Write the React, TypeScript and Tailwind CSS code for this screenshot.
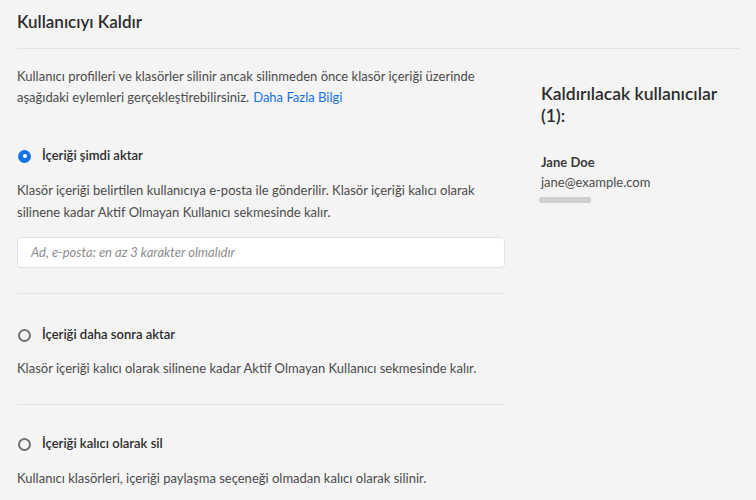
import React from "react";

function Radio({ checked }: { checked?: boolean }) {
  if (checked) {
    return (
      <span className="flex h-[13px] w-[13px] shrink-0 items-center justify-center rounded-full bg-[#1473e6]">
        <span className="h-[4px] w-[4px] rounded-full bg-white" />
      </span>
    );
  }
  return <span className="h-[13px] w-[13px] shrink-0 rounded-full border-2 border-[#707070] bg-[#f7f7f7]" />;
}

function Option({ checked, label, children }: { checked?: boolean; label: string; children: React.ReactNode }) {
  return (
    <div>
      <div className="flex h-[22px] items-center gap-[11px] pl-[1px]">
        <Radio checked={checked} />
        <span className="text-[13px] font-semibold text-[#2c2c2c]">{label}</span>
      </div>
      {children}
    </div>
  );
}

export default function App() {
  return (
    <div
      className="h-[500px] w-[756px] overflow-hidden bg-[#f4f4f4] text-[#4b4b4b]"
      style={{ fontFamily: "Lato, 'Open Sans', sans-serif" }}
    >
      <div className="px-[17px] pt-[10px]">
        <h1 className="h-[24px] text-[17px] font-semibold leading-[24px] text-[#2c2c2c]">Kullanıcıyı Kaldır</h1>
        <div className="mt-[14px] mr-[-1px] w-[723px] border-t border-[#e3e3e3]" />
      </div>
      <div className="flex gap-[36px] px-[17px] pt-[17px]">
        <div className="w-[488px] shrink-0">
          <div className="text-[13px] leading-[21px]">
            <div>Kullanıcı profilleri ve klasörler silinir ancak silinmeden önce klasör içeriği üzerinde</div>
            <div className="flex gap-[4px]">
              <span>aşağıdaki eylemleri gerçekleştirebilirsiniz.</span>
              <a className="text-[#1473e6]">Daha Fazla Bilgi</a>
            </div>
          </div>
          <div className="mt-[37px]">
            <Option checked label="İçeriği şimdi aktar">
              <p className="mt-[12px] text-[13px] leading-[22px]">
                Klasör içeriği belirtilen kullanıcıya e-posta ile gönderilir. Klasör içeriği kalıcı olarak silinene kadar
                Aktif Olmayan Kullanıcı sekmesinde kalır.
              </p>
              <div className="mt-[14px] flex h-[31px] items-center rounded-[4px] border border-[#e1e1e1] bg-white px-[13px]">
                <span className="text-[13px] italic text-[#8e8e8e]">Ad, e-posta: en az 3 karakter olmalıdır</span>
              </div>
            </Option>
          </div>
          <div className="mt-[25px] border-t border-[#e3e3e3]" />
          <div className="mt-[30px]">
            <Option label="İçeriği daha sonra aktar">
              <p className="mt-[11px] text-[13px] leading-[22px]">
                Klasör içeriği kalıcı olarak silinene kadar Aktif Olmayan Kullanıcı sekmesinde kalır.
              </p>
            </Option>
          </div>
          <div className="mt-[25px] border-t border-[#e3e3e3]" />
          <div className="mt-[28px]">
            <Option label="İçeriği kalıcı olarak sil">
              <p className="mt-[12px] text-[13px] leading-[22px]">
                Kullanıcı klasörleri, içeriği paylaşma seçeneği olmadan kalıcı olarak silinir.
              </p>
            </Option>
          </div>
        </div>
        <div className="pt-[17px]">
          <h2 className="text-[17.5px] font-semibold leading-[22px] text-[#2c2c2c]">
            Kaldırılacak kullanıcılar
            <br />
            (1):
          </h2>
          <div className="mt-[25px] text-[13px] font-bold leading-[20px] text-[#3a3a3a]">Jane Doe</div>
          <div className="text-[13px] leading-[20px]">jane@example.com</div>
          <div className="mt-[5px] ml-[-2px] h-[6px] w-[52px] rounded-[2px] bg-[#cfcfcf]" />
        </div>
      </div>
    </div>
  );
}
